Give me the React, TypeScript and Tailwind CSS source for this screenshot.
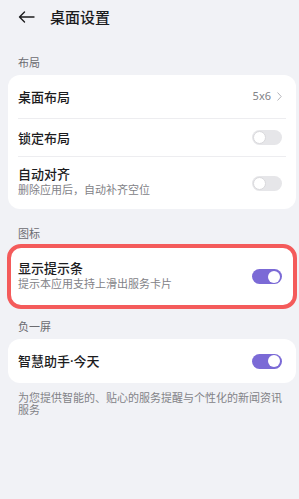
import React from "react";

function Toggle({ on }: { on: boolean }) {
  return on ? (
    <div className="w-[30px] h-[15px] rounded-full bg-[#7b6ad6] flex items-center justify-end pr-[2px]">
      <div className="w-[12px] h-[12px] rounded-full bg-white" />
    </div>
  ) : (
    <div className="w-[30px] h-[15px] rounded-full bg-[#e6e6e9] flex items-center pl-[1px]">
      <div className="w-[13px] h-[13px] rounded-full bg-white border border-[#d9d9dc]" />
    </div>
  );
}

function Label({ text }: { text: string }) {
  return <div className="px-[18px] text-[11px] leading-[16px] text-[#6b6b70]">{text}</div>;
}

function Row({
  title,
  sub,
  right,
  h,
}: {
  title: string;
  sub?: string;
  right: React.ReactNode;
  h: string;
}) {
  return (
    <div className={`flex items-center justify-between ${h}`}>
      <div className={`flex flex-col ${sub ? "gap-[1px] pb-[4px]" : ""}`}>
        <span className="text-[13px] leading-[16px] font-medium text-[#1c1c1e]">{title}</span>
        {sub && <span className="text-[11px] leading-[13px] text-[#828287]">{sub}</span>}
      </div>
      {right}
    </div>
  );
}

export default function App() {
  return (
    <div
      className="w-[299px] h-[499px] bg-[#f1f2f6] overflow-hidden"
      style={{ fontFamily: '"Noto Sans", "Noto Sans CJK SC", sans-serif' }}
    >
      <div className="h-[34px] flex items-center pl-[18px]">
        <svg width="17" height="12" viewBox="0 0 17 12" fill="none" stroke="#1c1c1e" strokeWidth="1.4" strokeLinecap="round" strokeLinejoin="round">
          <path d="M16 6H1.5M6.5 1L1.5 6l5 5" />
        </svg>
        <span className="ml-[15px] text-[15px] font-medium text-[#1c1c1e]">桌面设置</span>
      </div>

      <div className="pt-[21px] pb-[4px]">
        <Label text="布局" />
      </div>
      <div className="ml-[8px] mr-[3px] bg-white rounded-[12px]">
        <Row
          h="h-[43px] pl-[10px] pr-[14px]"
          title="桌面布局"
          right={
            <div className="flex items-center gap-[6px]">
              <span className="text-[11px] text-[#828287]">5x6</span>
              <svg width="5" height="9" viewBox="0 0 5 9" fill="none" stroke="#b5b5ba" strokeWidth="1" strokeLinecap="round" strokeLinejoin="round">
                <path d="M0.8 0.8L4.2 4.5L0.8 8.2" />
              </svg>
            </div>
          }
        />
        <div className="mx-[10px] h-px bg-[#ededf0]" />
        <Row h="h-[37px] pl-[10px] pr-[14px]" title="锁定布局" right={<Toggle on={false} />} />
        <div className="mx-[10px] h-px bg-[#ededf0]" />
        <Row h="h-[52px] pl-[10px] pr-[14px]" title="自动对齐" sub="删除应用后，自动补齐空位" right={<Toggle on={false} />} />
      </div>

      <div className="pt-[17px] pb-[2px]">
        <Label text="图标" />
      </div>
      <div className="ml-[7px] mr-[2px] bg-white rounded-[14px] border-[4px] border-[#f45b5b]">
        <Row h="h-[57px] pl-[7px] pr-[11px]" title="显示提示条" sub="提示本应用支持上滑出服务卡片" right={<Toggle on />} />
      </div>

      <div className="pt-[10px] pb-[4px]">
        <Label text="负一屏" />
      </div>
      <div className="ml-[8px] mr-[3px] bg-white rounded-[12px]">
        <Row h="h-[44px] pl-[10px] pr-[14px]" title="智慧助手·今天" right={<Toggle on />} />
      </div>

      <div className="ml-[18px] w-[280px] pt-[9px] text-[11px] leading-[12px] text-[#828287]">
        为您提供智能的、贴心的服务提醒与个性化的新闻资讯
        <br />
        服务
      </div>
    </div>
  );
}
